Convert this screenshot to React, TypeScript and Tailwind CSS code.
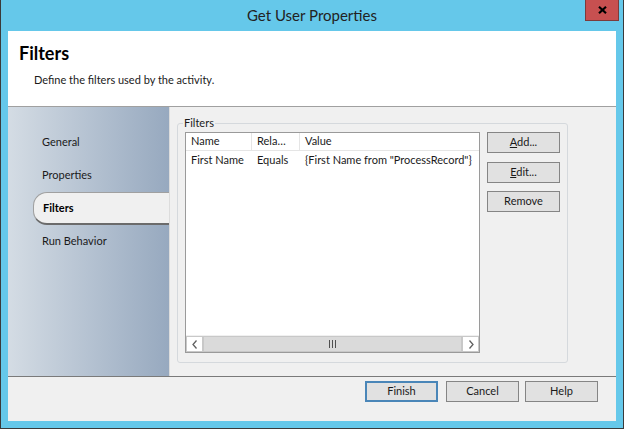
import React from "react";

const font = { fontFamily: "Lato, 'Liberation Sans', sans-serif" };

function Btn({ children, w = "w-[73px]", primary = false, className = "" }: { children: React.ReactNode; w?: string; primary?: boolean; className?: string }) {
  return (
    <div
      className={`${w} h-[21px] flex items-center justify-center bg-[#e1e1e1] text-[11px] text-[#1a1a1a] ${
        primary ? "border-2 border-[#4a86b8]" : "border border-[#858585]"
      } ${className}`}
    >
      {children}
    </div>
  );
}

export default function App() {
  const navItems = ["General", "Properties", "Filters", "Run Behavior"];
  return (
    <div className="w-[624px] h-[429px] bg-[#65c8ea] border-l border-r border-b border-[#3a3a3a] flex flex-col relative" style={font}>
      {/* Title bar */}
      <div className="h-[31px] flex items-center justify-center text-[15px] text-[#222] shrink-0">
        Get User Properties
      </div>
      <div className="absolute left-[584px] top-0 w-[34px] h-[21px] bg-[#c75050] border border-[#7c3b3b] border-t-0 flex items-center justify-center">
        <svg width="9" height="8" viewBox="0 0 9 8">
          <path d="M1 0.8 L8 7.2 M8 0.8 L1 7.2" stroke="#000" strokeWidth="2.2" />
        </svg>
      </div>

      {/* Client area */}
      <div className="mx-[7px] h-[390px] flex flex-col bg-[#f0f0f0]">
        {/* Header */}
        <div className="h-[76px] bg-white border-b border-[#a0a0a0] pl-[11px] pt-[12px] shrink-0">
          <div className="text-[18px] font-bold text-black leading-[20px]">Filters</div>
          <div className="text-[11px] text-[#1a1a1a] pl-[15px] pt-[10px] leading-[14px]">
            Define the filters used by the activity.
          </div>
        </div>

        {/* Middle */}
        <div className="h-[269px] flex shrink-0">
          {/* Nav */}
          <div className="w-[161px] bg-gradient-to-r from-[#d4dce4] to-[#97a9bf] pt-[19px] flex flex-col">
            {navItems.map((item) =>
              item === "Filters" ? (
                <div
                  key={item}
                  className="h-[33px] ml-[25px] -mr-[1px] bg-[#f0f0f0] rounded-l-[14px] border-t border-l border-[#a0a0a0] border-b-2 border-b-[#6b6b6b] flex items-center pl-[9px] text-[11px] font-bold text-black"
                >
                  {item}
                </div>
              ) : (
                <div key={item} className="h-[33px] flex items-center pl-[34px] text-[11px] text-[#1a1a1a]">
                  {item}
                </div>
              )
            )}
          </div>

          {/* Content */}
          <div className="flex-1 border-l border-[#dcdcdc] pl-[7px] pt-[16px]">
            <div className="relative w-[391px] h-[240px] border border-[#d5d9dd] rounded-[3px] flex pl-[7px] pt-[8px] gap-[7px]">
              <div className="absolute left-[5px] -top-[8px] px-[1px] bg-[#f0f0f0] text-[11px] leading-[14px] text-[#1a1a1a]">
                Filters
              </div>
              {/* List view */}
              <div className="w-[295px] h-[221px] border border-[#9a9a9a] bg-white flex flex-col text-[11px] text-[#1a1a1a]">
                <div className="h-[18px] flex shrink-0">
                  <div className="w-[66px] border-r border-b border-[#e5e5e5] pl-[5px] flex items-center">Name</div>
                  <div className="w-[48px] border-r border-b border-[#e5e5e5] pl-[5px] flex items-center">Rela…</div>
                  <div className="flex-1 border-b border-[#e5e5e5] pl-[5px] flex items-center">Value</div>
                </div>
                <div className="h-[18px] flex items-center">
                  <div className="w-[66px] pl-[5px]">First Name</div>
                  <div className="w-[48px] pl-[5px]">Equals</div>
                  <div className="flex-1 pl-[5px] whitespace-nowrap">{"{First Name from \"ProcessRecord\"}"}</div>
                </div>
                <div className="flex-1" />
                {/* Scrollbar */}
                <div className="h-[17px] flex border-t border-[#f0f0f0]">
                  <div className="w-[17px] h-full bg-white border border-[#c8c8c8] flex items-center justify-center">
                    <svg width="6" height="9" viewBox="0 0 6 9">
                      <path d="M4.5 0.5 L1 4.5 L4.5 8.5" stroke="#606060" strokeWidth="1.3" fill="none" />
                    </svg>
                  </div>
                  <div className="flex-1 h-full bg-[#dadada] border border-[#c8c8c8] flex items-center justify-center">
                    <svg width="7" height="8" viewBox="0 0 7 8">
                      <path d="M0.5 0 V8 M3.5 0 V8 M6.5 0 V8" stroke="#505050" strokeWidth="1" />
                    </svg>
                  </div>
                  <div className="w-[17px] h-full bg-white border border-[#c8c8c8] flex items-center justify-center">
                    <svg width="6" height="9" viewBox="0 0 6 9">
                      <path d="M1.5 0.5 L5 4.5 L1.5 8.5" stroke="#606060" strokeWidth="1.3" fill="none" />
                    </svg>
                  </div>
                </div>
              </div>
              {/* Buttons */}
              <div className="flex flex-col">
                <Btn><span><span className="underline">A</span>dd...</span></Btn>
                <Btn className="mt-[9px]"><span><span className="underline">E</span>dit...</span></Btn>
                <Btn className="mt-[8px]">Remove</Btn>
              </div>
            </div>
          </div>
        </div>

        {/* Footer */}
        <div className="flex-1 border-t border-[#7a7a7a] flex justify-end items-start pt-[4px] pr-[18px]">
          <Btn primary>Finish</Btn>
          <Btn className="ml-[8px]">Cancel</Btn>
          <Btn className="ml-[6px]">Help</Btn>
        </div>
      </div>
    </div>
  );
}
